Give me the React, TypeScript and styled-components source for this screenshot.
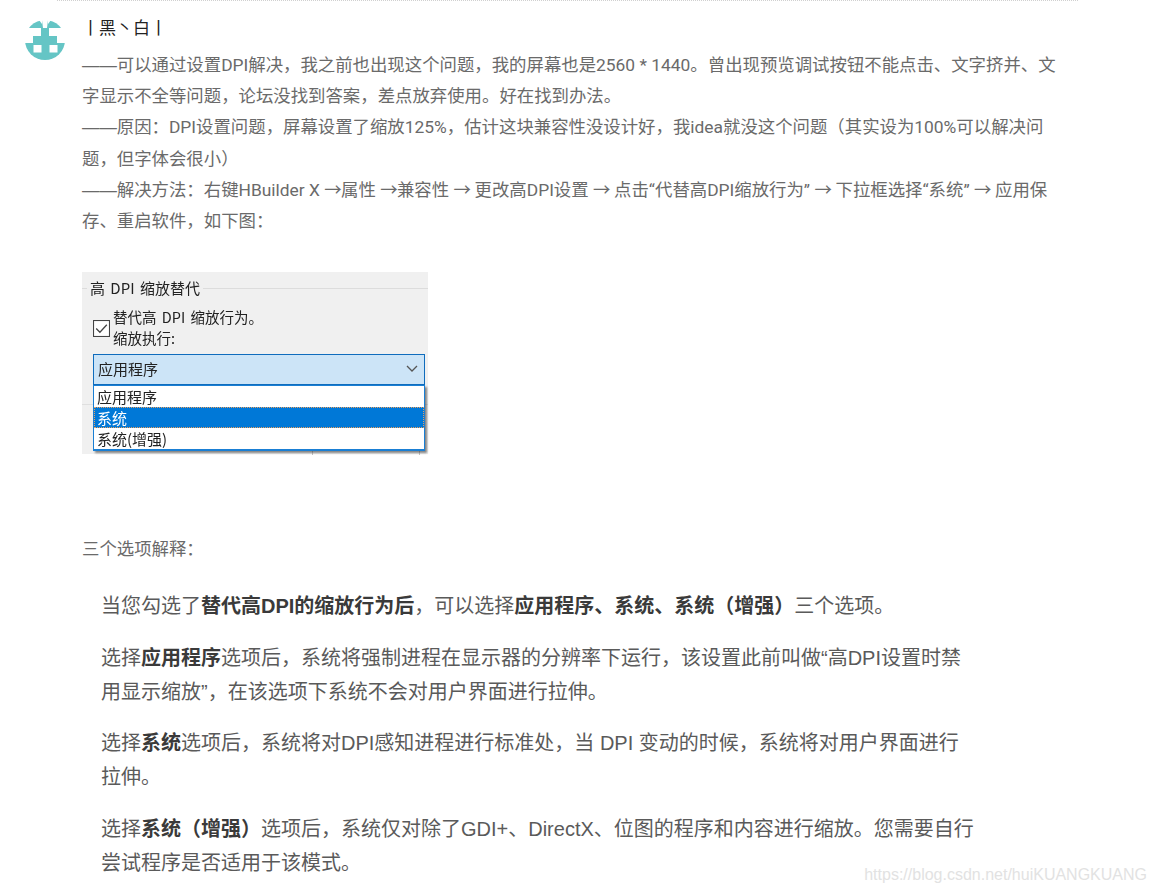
import React from 'react';
import styled, { createGlobalStyle } from 'styled-components';

const GlobalStyle = createGlobalStyle`
    html, body {
        margin: 0;
        height: 893px;
        overflow: hidden;
        background: #fff;
    }
    body {
        font-family: "Liberation Sans", "Noto Sans CJK SC", sans-serif;
    }
`;

const Page = styled.div`
    position: relative;
    width: 1156px;
    height: 893px;
    overflow: hidden;
`;

const Comment = styled.div`
    display: flex;
    width: 1021px;
    margin-left: 57px;
    border-top: 1px dotted #d0d0d0;
    padding-top: 19px;
    position: relative;
`;

const Avatar = styled.svg`
    position: absolute;
    left: -32px;
    top: 19px;
    width: 40px;
    height: 40px;
`;

const Body = styled.div`
    margin-left: 25px;
    width: 985px;
`;

const UserName = styled.div`
    font-family: "Noto Sans CJK SC", sans-serif;
    font-size: 17px;
    line-height: 13px;
    color: #222;
    height: 30px;
    word-spacing: 1px;
`;

const Line = styled.div`
    font-family: Roboto, "Noto Sans CJK SC", sans-serif;
    font-size: 17.4px;
    line-height: 31.2px;
    color: #6a6a6a;
    white-space: nowrap;
`;

const Dash = styled.span`
    font-family: "Liberation Sans", sans-serif;
`;

const Arrow = styled.span`
    letter-spacing: -0.6px;
`;

const DpiShot = styled.div`
    width: 346px;
    height: 182px;
    background: #f0f0f0;
    margin-top: 35px;
    padding: 8px 3px 0 11px;
    box-sizing: border-box;
    position: relative;
    font-family: "Noto Sans CJK SC", sans-serif;
    color: #222;
    filter: blur(0.35px);
`;

const GroupTitle = styled.div`
    display: flex;
    align-items: center;
    gap: 3px;
    margin: 0 -3px;
    font-size: 15px;
    line-height: 16px;
    word-spacing: 2px;
    white-space: nowrap;
    &::after {
        content: '';
        flex: 1;
        border-top: 1px solid #dcdcdc;
    }
    &::before {
        content: '';
        width: 5px;
        margin-left: -8px;
        border-top: 1px solid #dcdcdc;
    }
`;

const CheckRow = styled.div`
    display: flex;
    align-items: center;
    gap: 3px;
    margin-top: 10px;
`;

const CheckBox = styled.svg`
    width: 17px;
    height: 17px;
    flex: none;
    margin-top: 2px;
`;

const CheckLabel = styled.div`
    font-size: 14.5px;
    line-height: 21px;
    word-spacing: 2px;
    white-space: nowrap;
`;

const Select = styled.div`
    display: flex;
    align-items: center;
    justify-content: space-between;
    height: 27px;
    margin-top: 6px;
    padding: 0 4px 2px;
    border: 1px solid #0f6cbd;
    background: #cce4f7;
    font-size: 15px;
`;

const Chevron = styled.svg`
    width: 14px;
    height: 8px;
    margin-right: 1px;
`;

const Dropdown = styled.div`
    position: absolute;
    left: 11px;
    top: 113px;
    width: 332px;
    border: 1px solid #1a7fd4;
    border-bottom-width: 2px;
    background: #fff;
    box-shadow: 2px 2px 2px rgba(0, 0, 0, 0.45);
    box-sizing: border-box;
`;

const Option = styled.div<{ $active?: boolean }>`
    height: 21px;
    line-height: 21px;
    padding-left: 3px;
    font-size: 15px;
    background: ${props => (props.$active ? '#0078d7' : '#fff')};
    color: ${props => (props.$active ? '#fff' : '#222')};
    outline: ${props => (props.$active ? '1px dotted #e8a060' : 'none')};
    outline-offset: -1px;
`;

const FooterStub = styled.div`
    position: absolute;
    left: 0;
    right: 0;
    top: 132px;
    height: 50px;
    border-top: 1px solid #dfdfdf;
`;

const StubButton = styled.div`
    position: absolute;
    right: 8px;
    top: 0;
    bottom: 0;
    width: 106px;
    border-left: 1px solid #c4c4c4;
    border-right: 1px solid #c4c4c4;
`;

const Explain = styled(Line)`
    margin-top: 80px;
`;

const Quote = styled.div`
    margin: 24px 0 0 19px;
    width: 890px;
`;

const QuoteText = styled.p`
    margin: 0 0 17.5px;
    font-size: 20px;
    line-height: 34px;
    color: #5a5a5a;
    white-space: nowrap;
    b {
        font-weight: 700;
        color: #3a3a3a;
    }
`;

const Watermark = styled.div`
    position: absolute;
    right: 9px;
    top: 865px;
    font-size: 16px;
    line-height: 20px;
    color: #e2e2e2;
`;

const App = () => (
    <Page>
        <GlobalStyle />
        <Comment>
            <Avatar viewBox="0 0 40 40">
                <circle cx="20" cy="20" r="20" fill="#65c5c5" />
                <path d="M17 0H23L22 8H18Z" fill="#fff" />
                <path d="M0 8H16V16H8V23H0Z M40 8H24V16H32V23H40Z" fill="#fff" />
                <path d="M14 0H17V4Z M26 0H23V4Z" fill="#fff" />
                <rect x="8.5" y="25" width="8" height="7.5" fill="#fff" />
                <rect x="24.5" y="25" width="8" height="7.5" fill="#fff" />
            </Avatar>
            <Body>
                <UserName>丨黑丶白丨</UserName>
                <Line><Dash>——</Dash>可以通过设置DPI解决，我之前也出现这个问题，我的屏幕也是2560 * 1440。曾出现预览调试按钮不能点击、文字挤并、文</Line>
                <Line>字显示不全等问题，论坛没找到答案，差点放弃使用。好在找到办法。</Line>
                <Line><Dash>——</Dash>原因：DPI设置问题，屏幕设置了缩放125%，估计这块兼容性没设计好，我idea就没这个问题（其实设为100%可以解决问</Line>
                <Line>题，但字体会很小）</Line>
                <Line>
                    <Dash>——</Dash>解决方法：右键HBuilder X <Arrow>→</Arrow>属性 <Arrow>→</Arrow>兼容性 <Arrow>→</Arrow> 更改高DPI设置 <Arrow>→</Arrow> 点击“代替高DPI缩放行为” <Arrow>→</Arrow> 下拉框选择“系统” <Arrow>→</Arrow> 应用保
                </Line>
                <Line>存、重启软件，如下图：</Line>
                <DpiShot>
                    <GroupTitle>高 DPI 缩放替代</GroupTitle>
                    <CheckRow>
                        <CheckBox viewBox="0 0 16 16">
                            <rect x="0.5" y="0.5" width="15" height="15" fill="#fff" stroke="#444" />
                            <path d="M3 8l3.5 3.5L13 4.5" fill="none" stroke="#444" strokeWidth="1.2" />
                        </CheckBox>
                        <CheckLabel>
                            替代高 DPI 缩放行为。
                            <br />
                            缩放执行:
                        </CheckLabel>
                    </CheckRow>
                    <Select>
                        应用程序
                        <Chevron viewBox="0 0 14 8">
                            <path d="M2 1l5 5 5-5" fill="none" stroke="#555" strokeWidth="1.3" />
                        </Chevron>
                    </Select>
                    <FooterStub>
                        <StubButton />
                    </FooterStub>
                    <Dropdown>
                        <Option>应用程序</Option>
                        <Option $active>系统</Option>
                        <Option>系统(增强)</Option>
                    </Dropdown>
                </DpiShot>
                <Explain>三个选项解释：</Explain>
                <Quote>
                    <QuoteText>
                        当您勾选了<b>替代高DPI的缩放行为后</b>，可以选择<b>应用程序、系统、系统（增强）</b>三个选项。
                    </QuoteText>
                    <QuoteText>
                        选择<b>应用程序</b>选项后，系统将强制进程在显示器的分辨率下运行，该设置此前叫做“高DPI设置时禁
                        <br />
                        用显示缩放”，在该选项下系统不会对用户界面进行拉伸。
                    </QuoteText>
                    <QuoteText>
                        选择<b>系统</b>选项后，系统将对DPI感知进程进行标准处，当 DPI 变动的时候，系统将对用户界面进行
                        <br />
                        拉伸。
                    </QuoteText>
                    <QuoteText>
                        选择<b>系统（增强）</b>选项后，系统仅对除了GDI+、DirectX、位图的程序和内容进行缩放。您需要自行
                        <br />
                        尝试程序是否适用于该模式。
                    </QuoteText>
                </Quote>
            </Body>
        </Comment>
        <Watermark>https://blog.csdn.net/huiKUANGKUANG</Watermark>
    </Page>
);

export default App;
